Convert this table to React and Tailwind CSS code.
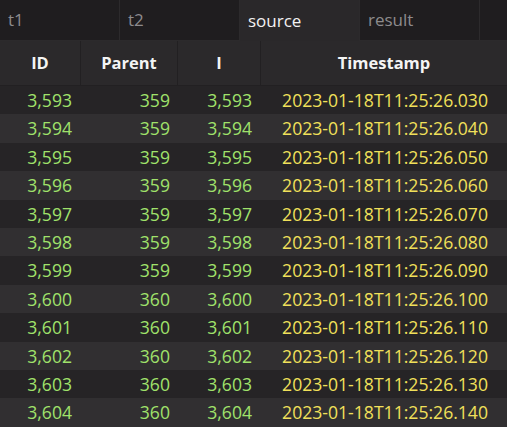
const tabs = [
  { name: 't1', active: false },
  { name: 't2', active: false },
  { name: 'source', active: true },
  { name: 'result', active: false },
];

const rows = Array.from({ length: 12 }, (_, i) => {
  const id = 3593 + i;
  const ms = String(30 + i * 10).padStart(3, '0');
  return {
    id: id.toLocaleString('en-US'),
    parent: id < 3600 ? 359 : 360,
    ts: `2023-01-18T11:25:26.${ms}`,
  };
});

export default function App() {
  return (
    <div
      className="w-[507px] h-[427px] overflow-hidden bg-[#2a282a] text-[17px]"
      style={{ fontFamily: '"Open Sans", "DejaVu Sans", sans-serif' }}
    >
      <div className="flex h-[41px] bg-[#1f1d1f]">
        {tabs.map((t) => (
          <div
            key={t.name}
            className={`w-[120px] flex items-center pl-[8px] border-r border-[#2c2a2c] ${
              t.active ? 'bg-[#2a282a] text-[#f2f2f2]' : 'border-b text-[#8d8b8d]'
            }`}
          >
            {t.name}
          </div>
        ))}
        <div className="flex-1 border-b border-[#2c2a2c]" />
      </div>

      <div className="flex h-[45px] font-bold text-[16.5px] text-[#f4f4f4] bg-[#2b292b] border-b border-[#222022]">
        <div className="w-[81px] flex items-center justify-center border-r border-[#222022]">ID</div>
        <div className="w-[97px] flex items-center justify-center border-r border-[#222022]">Parent</div>
        <div className="w-[83px] flex items-center justify-center border-r border-[#222022]">I</div>
        <div className="flex-1 flex items-center justify-center">Timestamp</div>
      </div>

      {rows.map((r, i) => (
        <div
          key={r.id}
          className={`flex h-[28.4px] items-center text-[17.6px] ${i % 2 ? 'bg-[#312f31]' : 'bg-[#262426]'}`}
        >
          <div className="w-[81px] text-right pr-[9px] text-[#a0e26b]">{r.id}</div>
          <div className="w-[97px] text-right pr-[8px] text-[#a0e26b]">{r.parent}</div>
          <div className="w-[83px] text-right pr-[9px] text-[#a0e26b]">{r.id}</div>
          <div className="flex-1 text-right pr-[19px] text-[#f1e05a] whitespace-nowrap">{r.ts}</div>
        </div>
      ))}
    </div>
  );
}
